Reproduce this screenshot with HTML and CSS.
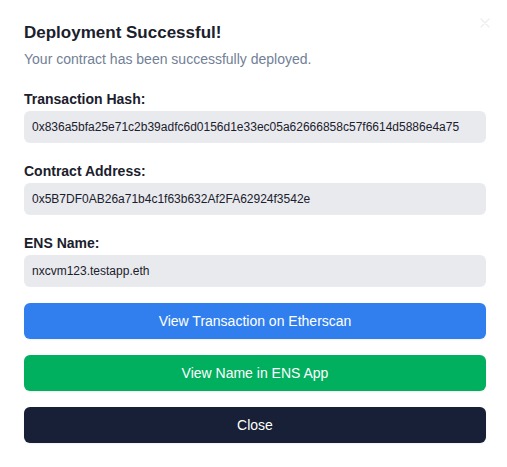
FILE: index.html
```html
<!DOCTYPE html>
<html lang="en">
<head>
<meta charset="utf-8">
<title>Deployment Successful</title>
<link rel="stylesheet" href="styles.css">
</head>
<body>
<div class="modal">
  <button class="close-x" aria-label="Close">
    <svg width="10" height="10" viewBox="0 0 10 10"><path d="M1 1L9 9M9 1L1 9" stroke="#eeeeee" stroke-width="1.4" stroke-linecap="round"/></svg>
  </button>
  <h2 class="title">Deployment Successful!</h2>
  <p class="subtitle">Your contract has been successfully deployed.</p>

  <div class="field">
    <div class="label">Transaction Hash:</div>
    <div class="value">0x836a5bfa25e71c2b39adfc6d0156d1e33ec05a62666858c57f6614d5886e4a75</div>
  </div>
  <div class="field">
    <div class="label">Contract Address:</div>
    <div class="value">0x5B7DF0AB26a71b4c1f63b632Af2FA62924f3542e</div>
  </div>
  <div class="field">
    <div class="label">ENS Name:</div>
    <div class="value">nxcvm123.testapp.eth</div>
  </div>

  <div class="actions">
    <button class="btn btn-blue">View Transaction on Etherscan</button>
    <button class="btn btn-green">View Name in ENS App</button>
    <button class="btn btn-dark">Close</button>
  </div>
</div>
</body>
</html>
```

FILE: styles.css
```css
* { box-sizing: border-box; }
html, body { margin: 0; padding: 0; background: #ffffff; }
body {
  font-family: "Liberation Sans", Arial, sans-serif;
  color: #1a202c;
}
.modal {
  position: relative;
  width: 507px;
  height: 467px;
  padding: 21px 21px 24px 24px;
  background: #ffffff;
}
.close-x {
  position: absolute;
  top: 17px;
  right: 16px;
  width: 12px;
  height: 12px;
  padding: 0;
  border: 0;
  background: transparent;
  display: flex;
  align-items: center;
  justify-content: center;
}
.title {
  margin: 0;
  font-size: 17px;
  line-height: 24px;
  font-weight: 700;
  color: #1a202c;
}
.subtitle {
  margin: 4px 0 0;
  font-size: 14px;
  line-height: 20px;
  color: #718096;
}
.field { margin-top: 18px; }
.field:first-of-type { margin-top: 20px; }
.label {
  font-size: 14px;
  line-height: 20px;
  font-weight: 700;
  color: #1a202c;
  margin-bottom: 2px;
}
.value {
  height: 32px;
  line-height: 32px;
  padding: 0 8px;
  font-size: 12px;
  color: #1a202c;
  background: #e9eaee;
  border-radius: 6px;
  white-space: nowrap;
  overflow: hidden;
}
.actions {
  margin-top: 16px;
  display: flex;
  flex-direction: column;
  gap: 16px;
}
.btn {
  height: 36px;
  border: 0;
  border-radius: 6px;
  font-family: "Liberation Sans", Arial, sans-serif;
  font-size: 14px;
  color: #ffffff;
  box-shadow: 0 1px 2px rgba(0,0,0,0.06);
}
.btn-blue { background: #317fef; }
.btn-green { background: #00b05e; }
.btn-dark { background: #172036; }
```
